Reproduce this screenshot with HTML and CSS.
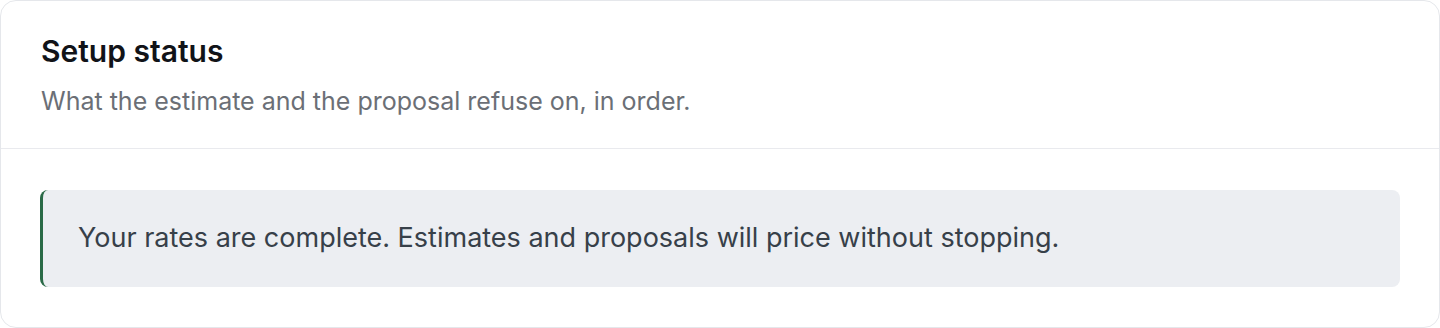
FILE: index.html
```html
<!DOCTYPE html>
<html lang="en">
<head>
<meta charset="utf-8">
<link rel="stylesheet" href="styles.css">
</head>
<body>
<section class="card">
  <header class="card-header">
    <h2 class="card-title">Setup status</h2>
    <p class="card-subtitle">What the estimate and the proposal refuse on, in order.</p>
  </header>
  <div class="card-body">
    <div class="callout">
      <p class="callout-text">Your rates are complete. Estimates and proposals will price without stopping.</p>
    </div>
  </div>
</section>
</body>
</html>
```
FILE: styles.css
```css
* { box-sizing: border-box; }
html, body { margin: 0; padding: 0; background: #ffffff; }
body { font-family: Inter, "Noto Sans", sans-serif; }
.card {
  width: 1440px;
  height: 328px;
  border: 1px solid #e5e7eb;
  border-radius: 16px;
  background: #fff;
  overflow: hidden;
}
.card-header {
  padding: 32px 40px 29px;
  border-bottom: 1px solid #e9eaee;
}
.card-title {
  margin: 0;
  font-size: 30px;
  line-height: 36px;
  font-weight: 600;
  color: #111318;
}
.card-subtitle {
  margin: 14px 0 0;
  font-size: 25px;
  line-height: 36px;
  color: #6b6f76;
}
.card-body {
  padding: 41px 39px 40px 39px;
}
.callout {
  background: #eceef2;
  border-left: 3px solid #2a6a47;
  border-radius: 8px;
  padding: 28px 35px 29px;
}
.callout-text {
  margin: 0;
  font-size: 27px;
  line-height: 40px;
  color: #374049;
}
```
